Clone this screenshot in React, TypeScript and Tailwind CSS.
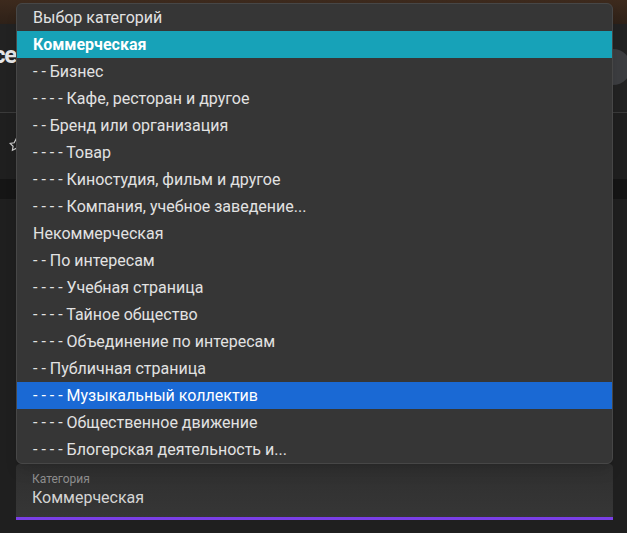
const items: { label: string; kind?: "teal" | "blue" }[] = [
  { label: "Выбор категорий" },
  { label: "Коммерческая", kind: "teal" },
  { label: "- - Бизнес" },
  { label: "- - - - Кафе, ресторан и другое" },
  { label: "- - Бренд или организация" },
  { label: "- - - - Товар" },
  { label: "- - - - Киностудия, фильм и другое" },
  { label: "- - - - Компания, учебное заведение..." },
  { label: "Некоммерческая" },
  { label: "- - По интересам" },
  { label: "- - - - Учебная страница" },
  { label: "- - - - Тайное общество" },
  { label: "- - - - Объединение по интересам" },
  { label: "- - Публичная страница" },
  { label: "- - - - Музыкальный коллектив", kind: "blue" },
  { label: "- - - - Общественное движение" },
  { label: "- - - - Блогерская деятельность и..." },
];

export default function App() {
  return (
    <div
      className="relative w-[627px] h-[533px] overflow-hidden bg-[#1f1f1f]"
      style={{ fontFamily: "Roboto, 'Noto Sans', sans-serif" }}
    >
      {/* page behind the menu */}
      <div className="h-[24px] bg-gradient-to-b from-[#3d2a1d] to-[#2e2118]" />
      <div className="h-[89px] bg-[#222222] border-b border-[#3a3a3a] flex items-center justify-between">
        <span className="-ml-[7px] -mt-[26px] text-[24px] font-bold text-[#e6e6e6] leading-none tracking-tighter">ce</span>
        <div className="w-[36px] h-[36px] rounded-full bg-[#3c3d40] -mr-[4px] -mt-[3px]" />
      </div>
      <div className="h-[66px] bg-[#1f1f1f] flex items-center pl-[9px] pb-[2px]">
        <svg width="14" height="14" viewBox="0 0 24 24" fill="none" stroke="#cfcfcf" strokeWidth="2">
          <path d="M12 2l3.09 6.26L22 9.27l-5 4.87 1.18 6.88L12 17.77l-6.18 3.25L7 14.14 2 9.27l6.91-1.01L12 2z" />
        </svg>
      </div>
      <div className="h-[20px] bg-[#151515]" />
      <div className="h-[265px]" />
      <div className="ml-[16px] w-[597px] h-[56px] rounded-t-[4px] bg-gradient-to-b from-[#2f2f2f] to-[#363636] border-b-[3px] border-[#7a3fe6] px-[16px] pt-[8px]">
        <div className="text-[12px] leading-[15px] text-[#8f8f8f]">Категория</div>
        <div className="text-[16px] leading-[22px] text-[#d4d4d4]">Коммерческая</div>
      </div>

      {/* dropdown menu */}
      <div className="absolute left-[16px] top-[3px] w-[597px] rounded-[6px] border border-[#474747] bg-[#363636] overflow-hidden shadow-lg">
        {items.map((it) => (
          <div
            key={it.label}
            className={
              "h-[27px] flex items-center px-[16px] text-[16px] whitespace-nowrap " +
              (it.kind === "teal"
                ? "bg-[#17a2b8] text-white font-bold"
                : it.kind === "blue"
                ? "bg-[#1a69d4] text-white"
                : "text-[#e2e2e2]")
            }
          >
            {it.label}
          </div>
        ))}
      </div>
    </div>
  );
}
